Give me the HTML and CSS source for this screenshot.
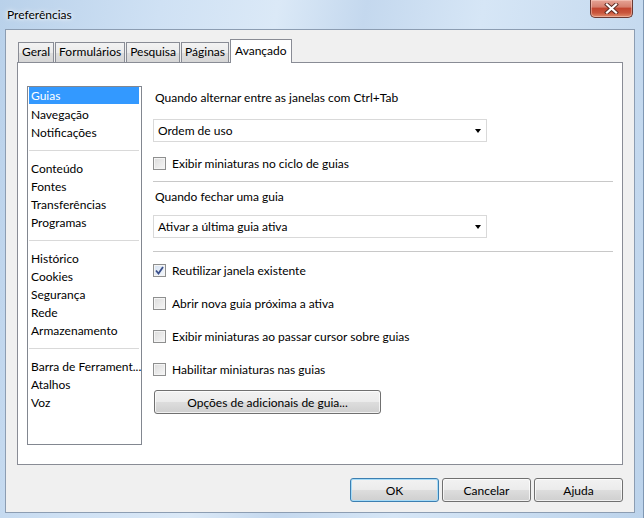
FILE: index.html
```html
<!DOCTYPE html>
<html lang="pt-BR">
<head>
    <meta charset="UTF-8">
    <title>Preferências</title>
    <link rel="stylesheet" href="styles.css">
</head>
<body>
    <div class="window">
        <div class="titlebar">
            <span class="title">Preferências</span>
            <button class="close-btn" aria-label="Fechar">
                <svg width="15" height="11" viewBox="0 0 15 11">
                    <path d="M3 1.5 L12 9.5 M12 1.5 L3 9.5" stroke="#5a2a22" stroke-width="4" stroke-linecap="square"/>
                    <path d="M3 1.5 L12 9.5 M12 1.5 L3 9.5" stroke="#fff" stroke-width="2.2" stroke-linecap="square"/>
                </svg>
            </button>
        </div>
        <div class="client">
            <div class="tabs">
                <div class="tab">Geral</div>
                <div class="tab">Formulários</div>
                <div class="tab">Pesquisa</div>
                <div class="tab">Páginas</div>
                <div class="tab active">Avançado</div>
            </div>
            <div class="panel">
                <ul class="sections">
                    <li class="selected">Guias</li>
                    <li>Navegação</li>
                    <li>Notificações</li>
                    <li class="sep"></li>
                    <li>Conteúdo</li>
                    <li>Fontes</li>
                    <li>Transferências</li>
                    <li>Programas</li>
                    <li class="sep"></li>
                    <li>Histórico</li>
                    <li>Cookies</li>
                    <li>Segurança</li>
                    <li>Rede</li>
                    <li>Armazenamento</li>
                    <li class="sep"></li>
                    <li>Barra de Ferrament...</li>
                    <li>Atalhos</li>
                    <li>Voz</li>
                </ul>
                <div class="settings">
                    <div class="label first">Quando alternar entre as janelas com Ctrl+Tab</div>
                    <div class="combo combo-1">
                        <span>Ordem de uso</span>
                        <span class="arrow"></span>
                    </div>
                    <label class="check-row row-1">
                        <span class="box"></span>
                        <span>Exibir miniaturas no ciclo de guias</span>
                    </label>
                    <div class="rule rule-1"></div>
                    <div class="label second">Quando fechar uma guia</div>
                    <div class="combo combo-2">
                        <span>Ativar a última guia ativa</span>
                        <span class="arrow"></span>
                    </div>
                    <div class="rule rule-2"></div>
                    <label class="check-row row-first">
                        <span class="box checked">
                            <svg width="9" height="9" viewBox="0 0 9 9">
                                <path d="M1 4.5 L3.5 7.5 L8 1" fill="none" stroke="#3a4f8a" stroke-width="1.8"/>
                            </svg>
                        </span>
                        <span>Reutilizar janela existente</span>
                    </label>
                    <label class="check-row">
                        <span class="box"></span>
                        <span>Abrir nova guia próxima a ativa</span>
                    </label>
                    <label class="check-row">
                        <span class="box"></span>
                        <span>Exibir miniaturas ao passar cursor sobre guias</span>
                    </label>
                    <label class="check-row">
                        <span class="box"></span>
                        <span>Habilitar miniaturas nas guias</span>
                    </label>
                    <button class="btn options-btn">Opções de adicionais de guia...</button>
                </div>
            </div>
            <div class="footer">
                <button class="btn default">OK</button>
                <button class="btn">Cancelar</button>
                <button class="btn">Ajuda</button>
            </div>
        </div>
    </div>
</body>
</html>
```

FILE: styles.css
```css
body {
    margin: 0;
    font-family: Lato, "Noto Sans", sans-serif;
    font-size: 12px;
    color: #000;
}
.window {
    width: 644px;
    height: 518px;
    box-sizing: border-box;
    display: flex;
    flex-direction: column;
    border-right: 1px solid #7f97b3;
    background: linear-gradient(100deg, #b9d1ea 0%, #cfe1f4 22%, #dbe9f7 38%, #c4d8ee 50%, #d6e6f6 66%, #bcd3eb 100%);
}
.titlebar {
    height: 29px;
    display: flex;
    align-items: flex-start;
    padding: 0 10px 0 7px;
}
.title {
    line-height: 29px;
    text-shadow: 0 0 6px #fff, 0 0 3px #fff;
}
.close-btn {
    margin-left: auto;
    width: 43px;
    height: 18px;
    padding: 0;
    border: 1px solid #6a3a34;
    border-top: none;
    border-radius: 0 0 5px 5px;
    background: linear-gradient(#e6a496 0%, #d6806f 40%, #c24630 50%, #c9553c 75%, #e08c6c 100%);
    box-shadow: inset 0 0 0 1px rgba(255, 220, 210, 0.45);
    display: flex;
    align-items: center;
    justify-content: center;
}
.client {
    flex: 1;
    margin: 0 8px 5px 5px;
    border: 1px solid #8c9db2;
    background: #f0f0f0;
    padding: 10px 11px 9px 11px;
    display: flex;
    flex-direction: column;
}

/* Tabs */
.tabs {
    height: 22px;
    display: flex;
    align-items: flex-end;
    padding-left: 1px;
}
.tab {
    height: 19px;
    line-height: 18px;
    padding: 0 3px;
    margin-right: 1px;
    border: 1px solid #898c95;
    border-bottom: none;
    background: linear-gradient(#f3f3f3, #ebebeb 50%, #dedede 51%, #d6d6d6);
    color: #000;
}
.tab.active {
    height: 23px;
    line-height: 21px;
    padding: 0 4px;
    margin-bottom: -1px;
    background: #fff;
    position: relative;
    z-index: 1;
}

/* Panel */
.panel {
    height: 403px;
    box-sizing: border-box;
    border: 1px solid #898c95;
    background: #fff;
    padding: 23px 8px 0 9px;
    display: flex;
    align-items: flex-start;
}
.sections {
    list-style: none;
    margin: 0;
    width: 115px;
    height: 359px;
    box-sizing: border-box;
    border: 1px solid #828790;
    padding: 0 2px 0 1px;
}
.sections li {
    height: 18px;
    line-height: 19px;
    padding-left: 2px;
    white-space: nowrap;
}
.sections li.selected {
    height: 17px;
    margin-bottom: 1px;
    line-height: 18px;
    background: #3399ff;
    color: #fff;
}
.sections li.sep {
    display: flex;
    align-items: center;
    padding: 0;
}
.sections li.sep::after {
    content: "";
    flex: 1;
    height: 1px;
    background: #d9d9d9;
}
.settings {
    flex: 1;
    margin-left: 11px;
    display: flex;
    flex-direction: column;
    align-items: flex-start;
}
.label {
    height: 16px;
    line-height: 16px;
    padding-left: 2px;
}
.label.first { margin-top: 4px; }
.label.second { margin-top: 7px; }
.combo {
    width: 334px;
    height: 23px;
    box-sizing: border-box;
    border: 1px solid #d9d9d9;
    background: #fff;
    display: flex;
    align-items: center;
    justify-content: space-between;
    padding: 0 5px 0 4px;
}
.combo-1 { margin-top: 13px; }
.combo-2 { margin-top: 10px; }
.arrow {
    width: 0;
    height: 0;
    border-left: 3.5px solid transparent;
    border-right: 3.5px solid transparent;
    border-top: 4px solid #000;
}
.check-row {
    height: 13px;
    display: flex;
    align-items: center;
    gap: 6px;
    margin-top: 20px;
}
.check-row.row-1 { margin-top: 15px; }
.check-row.row-first { margin-top: 12px; }
.box {
    width: 13px;
    height: 13px;
    box-sizing: border-box;
    border: 1px solid #8e8f8f;
    background: linear-gradient(135deg, #dcdcdc, #f6f6f6);
    box-shadow: inset 0 0 0 1px #f4f4f4;
    display: flex;
    align-items: center;
    justify-content: center;
}
.box.checked {
    background: linear-gradient(135deg, #d6e2f2, #f4f7fb);
}
.rule {
    width: 460px;
    height: 1px;
    background: #c8c8c8;
}
.rule-1 { margin-top: 11px; }
.rule-2 { margin-top: 13px; }

/* Buttons */
.btn {
    font-family: inherit;
    font-size: 12px;
    color: #000;
    height: 24px;
    padding: 0;
    border: 1px solid #707070;
    border-radius: 3px;
    background: linear-gradient(#f2f2f2, #ebebeb 50%, #dddddd 51%, #cfcfcf);
    box-shadow: inset 0 0 0 1px rgba(255, 255, 255, 0.7);
}
.options-btn {
    width: 227px;
    margin: 14px 0 0 1px;
}
.footer {
    margin-top: 13px;
    display: flex;
    justify-content: flex-end;
    gap: 3px;
}
.footer .btn {
    width: 89px;
}
.footer .btn.default {
    border-color: #3c7fb1;
    box-shadow: inset 0 0 0 1px #a6dbf7;
}
```
